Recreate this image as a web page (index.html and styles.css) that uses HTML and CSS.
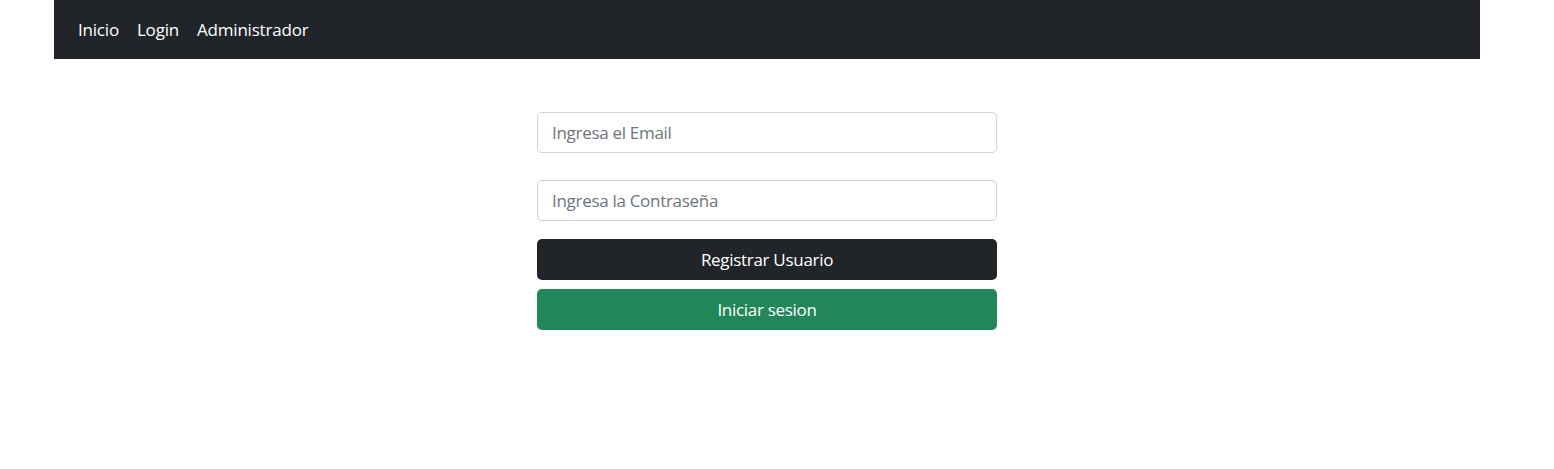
FILE: index.html
```html
<!DOCTYPE html>
<html lang="es">
<head>
<meta charset="utf-8">
<title>Login</title>
<link rel="stylesheet" href="styles.css">
</head>
<body>
<div class="page">
  <nav class="navbar">
    <a class="nav-link" href="#">Inicio</a>
    <a class="nav-link" href="#">Login</a>
    <a class="nav-link" href="#">Administrador</a>
  </nav>
  <main class="main">
    <form class="form">
      <input class="input" type="email" placeholder="Ingresa el Email">
      <input class="input" type="password" placeholder="Ingresa la Contraseña">
      <button class="btn btn-dark" type="button">Registrar Usuario</button>
      <button class="btn btn-success" type="button">Iniciar sesion</button>
    </form>
  </main>
</div>
</body>
</html>
```
FILE: styles.css
```css
html, body {
  margin: 0;
  padding: 0;
  background: #fff;
}
body {
  font-family: "Open Sans", "Noto Sans", sans-serif;
  font-size: 17px;
  color: #212529;
}
.page {
  margin-left: 54px;
  width: 1426px;
}
.navbar {
  background: #212529;
  height: 59px;
  display: flex;
  align-items: center;
  padding: 0 14px 0 15px;
  box-sizing: border-box;
}
.nav-link {
  color: #fff;
  text-decoration: none;
  padding: 0 9px;
  font-size: 17px;
  letter-spacing: -0.2px;
  line-height: 24px;
  margin-top: 1px;
}
.main {
  display: flex;
  justify-content: center;
  padding-top: 53px;
}
.form {
  width: 460px;
  display: flex;
  flex-direction: column;
}
.input {
  height: 41px;
  box-sizing: border-box;
  border: 1px solid #ced4da;
  border-radius: 5px;
  padding: 0 14px;
  font-family: inherit;
  font-size: 17px;
  letter-spacing: -0.3px;
  color: #212529;
  margin-bottom: 27px;
  outline: none;
}
.input:nth-child(2) {
  margin-bottom: 18px;
}
.input::placeholder {
  color: #6c757d;
}
.btn {
  height: 41px;
  border: none;
  border-radius: 5px;
  font-family: inherit;
  font-size: 17px;
  letter-spacing: -0.3px;
  color: #fff;
  cursor: pointer;
  margin-bottom: 9px;
}
.btn-dark {
  background: #212529;
}
.btn-success {
  background: #218759;
}
```
